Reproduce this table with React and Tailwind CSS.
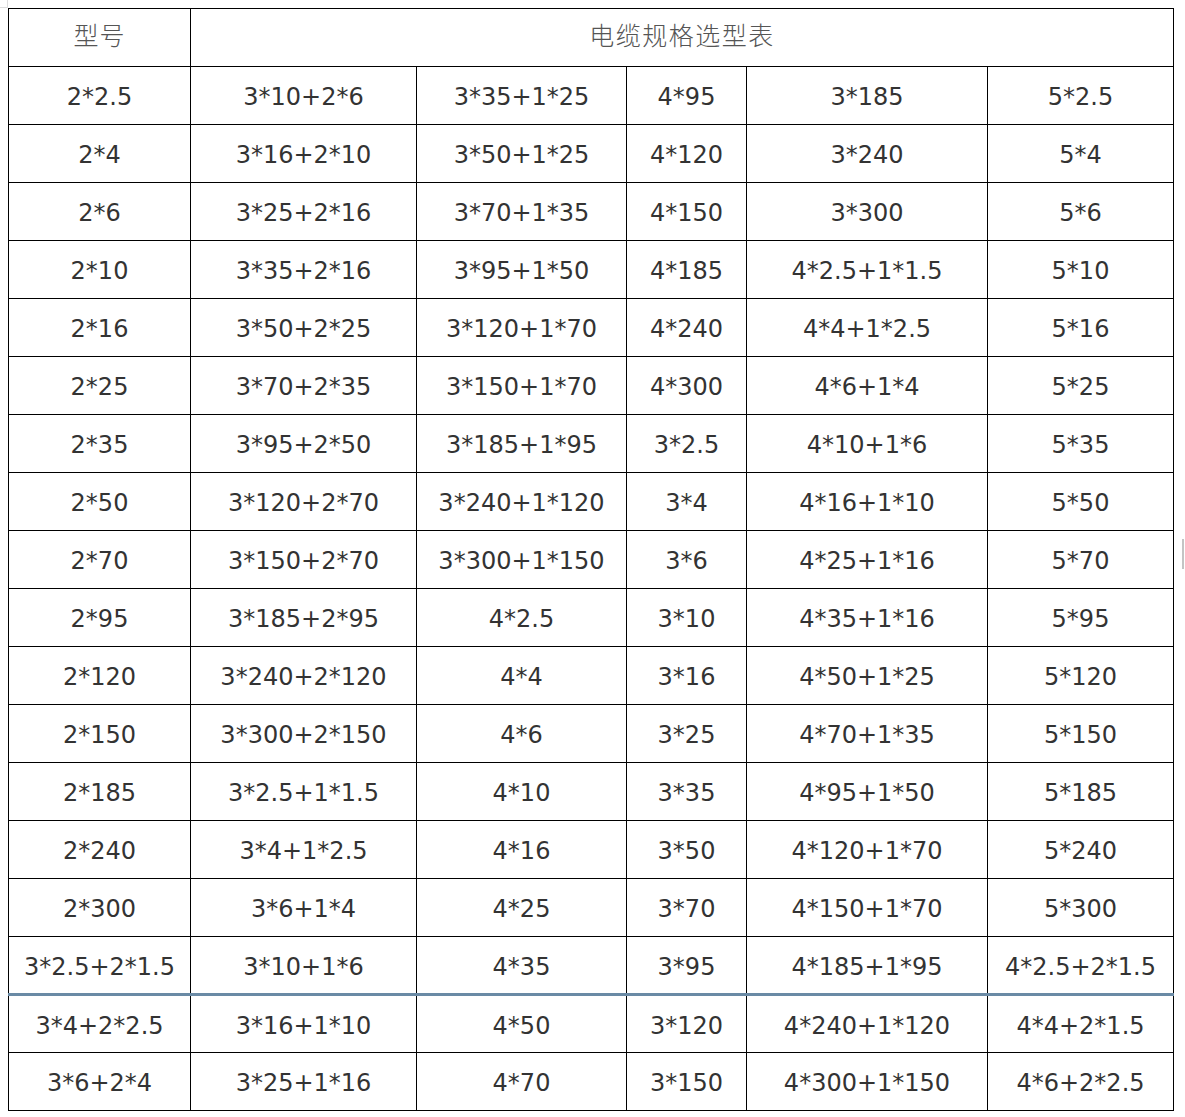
import React from "react";

const cols = [
  ["2*2.5", "2*4", "2*6", "2*10", "2*16", "2*25", "2*35", "2*50", "2*70", "2*95", "2*120", "2*150", "2*185", "2*240", "2*300", "3*2.5+2*1.5", "3*4+2*2.5", "3*6+2*4"],
  ["3*10+2*6", "3*16+2*10", "3*25+2*16", "3*35+2*16", "3*50+2*25", "3*70+2*35", "3*95+2*50", "3*120+2*70", "3*150+2*70", "3*185+2*95", "3*240+2*120", "3*300+2*150", "3*2.5+1*1.5", "3*4+1*2.5", "3*6+1*4", "3*10+1*6", "3*16+1*10", "3*25+1*16"],
  ["3*35+1*25", "3*50+1*25", "3*70+1*35", "3*95+1*50", "3*120+1*70", "3*150+1*70", "3*185+1*95", "3*240+1*120", "3*300+1*150", "4*2.5", "4*4", "4*6", "4*10", "4*16", "4*25", "4*35", "4*50", "4*70"],
  ["4*95", "4*120", "4*150", "4*185", "4*240", "4*300", "3*2.5", "3*4", "3*6", "3*10", "3*16", "3*25", "3*35", "3*50", "3*70", "3*95", "3*120", "3*150"],
  ["3*185", "3*240", "3*300", "4*2.5+1*1.5", "4*4+1*2.5", "4*6+1*4", "4*10+1*6", "4*16+1*10", "4*25+1*16", "4*35+1*16", "4*50+1*25", "4*70+1*35", "4*95+1*50", "4*120+1*70", "4*150+1*70", "4*185+1*95", "4*240+1*120", "4*300+1*150"],
  ["5*2.5", "5*4", "5*6", "5*10", "5*16", "5*25", "5*35", "5*50", "5*70", "5*95", "5*120", "5*150", "5*185", "5*240", "5*300", "4*2.5+2*1.5", "4*4+2*1.5", "4*6+2*2.5"],
];

const rows = cols[0].map((_, i) => cols.map((c) => c[i]));

export default function App() {
  return (
    <div className="relative w-[1185px] h-[1117px] bg-white pt-[8px] pl-[8px]">
      {/* corner mark */}
      <div className="absolute left-0 top-0 w-[8px] h-[8px] border-r border-b border-[#dddddd]" />
      {/* scrollbar-ish mark on the right */}
      <div className="absolute left-[1182px] top-[539px] w-[2px] h-[30px] bg-[#c4c4c4]" />

      <table className="table-fixed border-collapse text-[#333333] font-['DejaVu_Sans','Noto_Sans_CJK_SC',sans-serif] text-[24px]">
        <colgroup>
          <col className="w-[182px]" />
          <col className="w-[226px]" />
          <col className="w-[210px]" />
          <col className="w-[120px]" />
          <col className="w-[241px]" />
          <col className="w-[186px]" />
        </colgroup>
        <tbody>
          <tr className="h-[58px]">
            <td className="border border-black text-center p-0 pb-[5px] text-[#555555] text-[25px] font-['Noto_Sans_CJK_SC',sans-serif] font-light tracking-[1px]">
              型号
            </td>
            <td colSpan={5} className="border border-black text-center p-0 pb-[5px] text-[#555555] text-[25px] font-['Noto_Sans_CJK_SC',sans-serif] font-light tracking-[1.5px]">
              电缆规格选型表
            </td>
          </tr>
          {rows.map((row, i) => (
            <tr key={i} className="h-[58px]">
              {row.map((cell, j) => (
                <td
                  key={j}
                  className={
                    i === 15
                      ? "border border-black border-b-[3px] border-b-[#6a8aa5] text-center p-0 pt-[3px] whitespace-nowrap"
                      : "border border-black text-center p-0 pt-[3px] whitespace-nowrap"
                  }
                >
                  {cell}
                </td>
              ))}
            </tr>
          ))}
        </tbody>
      </table>
    </div>
  );
}
